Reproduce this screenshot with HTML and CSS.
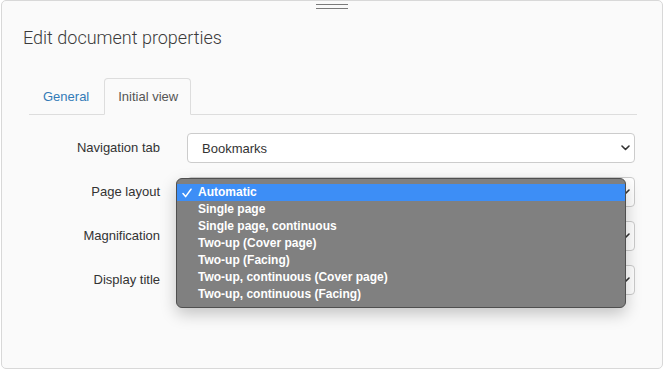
FILE: index.html
```html
<!DOCTYPE html>
<html lang="en">
<head>
<meta charset="utf-8">
<title>Edit document properties</title>
<link rel="stylesheet" href="styles.css">
</head>
<body>
<div class="panel">
  <div class="handle"></div>
  <h1 class="title">Edit document properties</h1>
  <ul class="tabs">
    <li class="tab"><a class="tab-link">General</a></li>
    <li class="tab active"><a class="tab-link">Initial view</a></li>
  </ul>
  <div class="form">
    <label class="label">Navigation tab</label>
    <div class="field">
      <div class="select"><span>Bookmarks</span><svg class="chev" width="9" height="6" viewBox="0 0 9 6"><polyline points="1,1 4.5,4.5 8,1" fill="none" stroke="#333" stroke-width="1.6" stroke-linecap="round" stroke-linejoin="round"/></svg></div>
    </div>
    <label class="label">Page layout</label>
    <div class="field">
      <div class="select"><span></span><svg class="chev" width="9" height="6" viewBox="0 0 9 6"><polyline points="1,1 4.5,4.5 8,1" fill="none" stroke="#333" stroke-width="1.6" stroke-linecap="round" stroke-linejoin="round"/></svg></div>
      <ul class="menu">
        <li class="opt selected"><span class="check"><svg width="10" height="10" viewBox="0 0 10 10"><polyline points="1,5.5 3.6,8.6 9,1.2" fill="none" stroke="#fff" stroke-width="1.5" stroke-linecap="round" stroke-linejoin="round"/></svg></span>Automatic</li>
        <li class="opt"><span class="check"></span>Single page</li>
        <li class="opt"><span class="check"></span>Single page, continuous</li>
        <li class="opt"><span class="check"></span>Two-up (Cover page)</li>
        <li class="opt"><span class="check"></span>Two-up (Facing)</li>
        <li class="opt"><span class="check"></span>Two-up, continuous (Cover page)</li>
        <li class="opt"><span class="check"></span>Two-up, continuous (Facing)</li>
      </ul>
    </div>
    <label class="label">Magnification</label>
    <div class="field">
      <div class="select"><span></span><svg class="chev" width="9" height="6" viewBox="0 0 9 6"><polyline points="1,1 4.5,4.5 8,1" fill="none" stroke="#333" stroke-width="1.6" stroke-linecap="round" stroke-linejoin="round"/></svg></div>
    </div>
    <label class="label">Display title</label>
    <div class="field">
      <div class="select"><span></span><svg class="chev" width="9" height="6" viewBox="0 0 9 6"><polyline points="1,1 4.5,4.5 8,1" fill="none" stroke="#333" stroke-width="1.6" stroke-linecap="round" stroke-linejoin="round"/></svg></div>
    </div>
  </div>
</div>
</body>
</html>
```
FILE: styles.css
```css
html, body {
  margin: 0;
  padding: 0;
  background: #ffffff;
}
body {
  font-family: "Liberation Sans", Arial, sans-serif;
  color: #333;
}
.panel {
  box-sizing: border-box;
  width: 662px;
  height: 369px;
  margin-left: 1px;
  border: 1px solid #d8d8d8;
  border-radius: 5px;
  background: #fafafa;
}
.handle {
  width: 32px;
  height: 3px;
  margin: 3px auto 0;
  border-top: 1px solid #7a7a7a;
  border-bottom: 1px solid #7a7a7a;
}
.title {
  margin: 18px 0 0 21px;
  font-family: Roboto, "Liberation Sans", Arial, sans-serif;
  font-size: 18px;
  line-height: 22px;
  font-weight: 300;
  color: #3a3a3a;
}
.tabs {
  list-style: none;
  display: flex;
  margin: 29px 25px 0 27px;
  padding: 0;
  border-bottom: 1px solid #dddddd;
}
.tab {
  margin-right: 2px;
  margin-bottom: -1px;
}
.tab-link {
  display: block;
  padding: 9px 12px 9px 13px;
  font-size: 13px;
  line-height: 17px;
  border: 1px solid transparent;
  border-radius: 4px 4px 0 0;
  color: #337ab7;
}
.tab.active .tab-link {
  color: #555;
  background: #fafafa;
  border-color: #dddddd #dddddd transparent;
}
.form {
  display: grid;
  grid-template-columns: 131px 448px;
  column-gap: 27px;
  row-gap: 14px;
  margin: 18px 0 0 27px;
}
.label {
  text-align: right;
  font-size: 13px;
  line-height: 30px;
  color: #333;
}
.field {
  position: relative;
}
.select {
  box-sizing: border-box;
  height: 30px;
  display: flex;
  align-items: center;
  justify-content: space-between;
  padding: 0 4px 0 14px;
  background: #fff;
  border: 1px solid #cccccc;
  border-radius: 4px;
  font-size: 13px;
  color: #333;
}
.chev {
  display: block;
}
.menu {
  position: absolute;
  left: -11px;
  top: 1px;
  width: 450px;
  box-sizing: border-box;
  margin: 0;
  padding: 4px 0 4px;
  list-style: none;
  background: #808080;
  border: 1px solid #4f4f4f;
  border-radius: 6px;
  box-shadow: 0 6px 16px rgba(0, 0, 0, 0.22);
  z-index: 2;
}
.opt {
  display: flex;
  align-items: center;
  height: 17px;
  font-size: 12px;
  font-weight: bold;
  line-height: 17px;
  color: #ffffff;
}
.opt.selected {
  background: #3d8ef6;
  margin-top: 1px;
}
.check {
  width: 21px;
  flex: none;
  display: flex;
  align-items: center;
}
.check svg {
  display: block;
  margin-left: 5px;
}
```
